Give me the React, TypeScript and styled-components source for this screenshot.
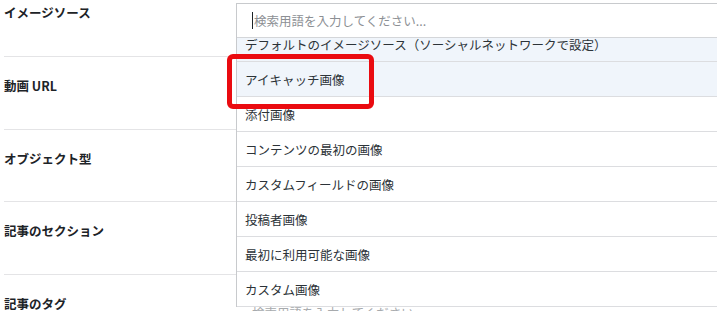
import React, { useLayoutEffect, useRef } from "react";
import styled, { createGlobalStyle } from "styled-components";

const GlobalStyle = createGlobalStyle`
  html, body {
    margin: 0;
    padding: 0;
    background: #ffffff;
    overflow: hidden;
  }
  body {
    font-family: "Noto Sans CJK JP", "Liberation Sans", sans-serif;
    color: #2c3338;
  }
`;

const Page = styled.div`
  width: 717px;
  height: 311px;
  overflow: hidden;
`;

const FormTable = styled.div`
  margin: -16px 0 0 4px;
  display: flex;
  flex-direction: column;
`;

const Row = styled.div<{ $h: number }>`
  display: flex;
  height: ${p => p.$h}px;
  box-sizing: border-box;
  border-bottom: 1px solid #e4e4e6;
`;

const Label = styled.div`
  width: 218px;
  flex-shrink: 0;
  padding-top: 20px;
  font-size: 12.5px;
  line-height: 18px;
  font-weight: 700;
  color: #1d2327;
`;

const Field = styled.div`
  flex: 1;
  position: relative;
`;

const TagInput = styled.div`
  padding: 29px 0 0 30px;
  font-size: 12.5px;
  line-height: 18px;
  color: #a7aaad;
`;

const Dropdown = styled.div`
  position: absolute;
  left: 14px;
  top: 19px;
  width: 520px;
  background: #ffffff;
  border-left: 1px solid #c8cacd;
  border-top: 1px solid #c8cacd;
  z-index: 10;
`;

const SearchBox = styled.div`
  height: 33px;
  display: flex;
  align-items: center;
  padding-left: 15px;
  border-bottom: 1px solid #d4d6d9;
  font-size: 12.5px;
  color: #8c8f94;
`;

const Caret = styled.span`
  display: inline-block;
  width: 1px;
  height: 17px;
  background: #1d2327;
  margin-right: 1px;
`;

const List = styled.div`
  height: 269px;
  overflow: hidden;
`;

const Item = styled.div<{ $active?: boolean }>`
  height: 35px;
  box-sizing: border-box;
  display: flex;
  align-items: center;
  padding-left: 8px;
  border-bottom: 1px solid #dcdde0;
  background: ${p => (p.$active ? "#f0f5fb" : "#ffffff")};
  font-size: 12.5px;
  color: #2c3338;
  white-space: nowrap;
`;

const Highlight = styled.div`
  position: absolute;
  left: -10px;
  top: 50px;
  width: 147px;
  height: 55px;
  box-sizing: border-box;
  border: 5px solid #ea0b10;
  border-radius: 6px;
  pointer-events: none;
`;

const options = [
  "デフォルトのイメージソース（ソーシャルネットワークで設定）",
  "アイキャッチ画像",
  "添付画像",
  "コンテンツの最初の画像",
  "カスタムフィールドの画像",
  "投稿者画像",
  "最初に利用可能な画像",
  "カスタム画像",
];

function SourceDropdown() {
  const listRef = useRef<HTMLDivElement>(null);

  useLayoutEffect(() => {
    if (listRef.current) listRef.current.scrollTop = 11;
  }, []);

  return (
    <Dropdown>
      <SearchBox>
        <Caret />
        検索用語を入力してください...
      </SearchBox>
      <List ref={listRef}>
        {options.map((o, i) => (
          <Item key={o} $active={i < 2}>
            {o}
          </Item>
        ))}
      </List>
      <Highlight />
    </Dropdown>
  );
}

export default function App() {
  return (
    <Page>
      <GlobalStyle />
      <FormTable>
        <Row $h={73}>
          <Label>イメージソース</Label>
          <Field>
            <SourceDropdown />
          </Field>
        </Row>
        <Row $h={73}>
          <Label>動画 URL</Label>
          <Field />
        </Row>
        <Row $h={72}>
          <Label>オブジェクト型</Label>
          <Field />
        </Row>
        <Row $h={73}>
          <Label>記事のセクション</Label>
          <Field />
        </Row>
        <Row $h={73}>
          <Label>記事のタグ</Label>
          <Field>
            <TagInput>検索用語を入力してください</TagInput>
          </Field>
        </Row>
      </FormTable>
    </Page>
  );
}
